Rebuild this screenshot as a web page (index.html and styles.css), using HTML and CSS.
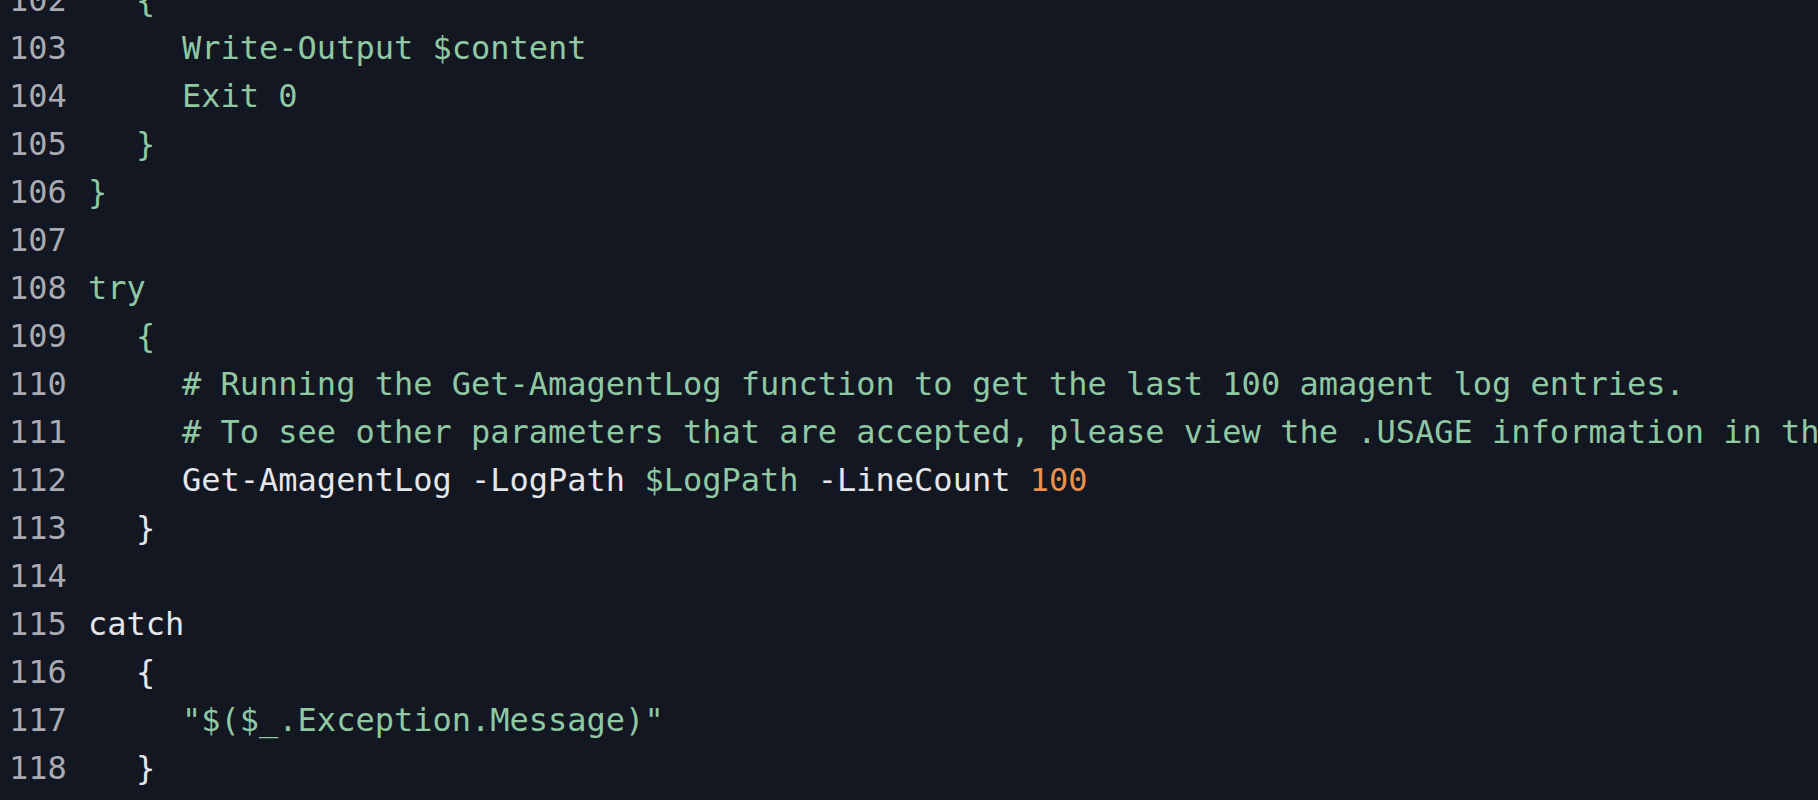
FILE: index.html
```html
<!DOCTYPE html>
<html lang="en">
<head>
<meta charset="utf-8">
<title>Code</title>
<link rel="stylesheet" href="styles.css">
</head>
<body>
<div class="viewer">
  <div class="line"><span class="ln">102</span><span class="code i1"><span class="g">{</span></span></div>
  <div class="line"><span class="ln">103</span><span class="code i2"><span class="g">Write-Output $content</span></span></div>
  <div class="line"><span class="ln">104</span><span class="code i2"><span class="g">Exit 0</span></span></div>
  <div class="line"><span class="ln">105</span><span class="code i1"><span class="g">}</span></span></div>
  <div class="line"><span class="ln">106</span><span class="code"><span class="g">}</span></span></div>
  <div class="line"><span class="ln">107</span><span class="code"></span></div>
  <div class="line"><span class="ln">108</span><span class="code"><span class="g">try</span></span></div>
  <div class="line"><span class="ln">109</span><span class="code i1"><span class="g">{</span></span></div>
  <div class="line"><span class="ln">110</span><span class="code i2"><span class="g"># Running the Get-AmagentLog function to get the last 100 amagent log entries.</span></span></div>
  <div class="line"><span class="ln">111</span><span class="code i2"><span class="g"># To see other parameters that are accepted, please view the .USAGE information in th</span></span></div>
  <div class="line"><span class="ln">112</span><span class="code i2"><span class="w">Get-AmagentLog -LogPath </span><span class="g">$LogPath</span><span class="w"> -LineCount </span><span class="o">100</span></span></div>
  <div class="line"><span class="ln">113</span><span class="code i1"><span class="w">}</span></span></div>
  <div class="line"><span class="ln">114</span><span class="code"></span></div>
  <div class="line"><span class="ln">115</span><span class="code"><span class="w">catch</span></span></div>
  <div class="line"><span class="ln">116</span><span class="code i1"><span class="w">{</span></span></div>
  <div class="line"><span class="ln">117</span><span class="code i2"><span class="g">"$($_.Exception.Message)"</span></span></div>
  <div class="line"><span class="ln">118</span><span class="code i1"><span class="w">}</span></span></div>
</div>
</body>
</html>
```
FILE: styles.css
```css
html, body {
  margin: 0;
  padding: 0;
  height: 100%;
  overflow: hidden;
  background: #121722;
}
.viewer {
  margin-top: -24px;
  font-family: "DejaVu Sans Mono", monospace;
  font-size: 32px;
  line-height: 48px;
  display: flex;
  flex-direction: column;
}
.line {
  display: flex;
  height: 48px;
  white-space: pre;
}
.ln {
  flex: 0 0 auto;
  width: 79px;
  padding-left: 9px;
  color: #a9aab2;
}
.code {
  flex: 1 1 auto;
  white-space: pre;
}
.i1 { padding-left: 48px; }
.i2 { padding-left: 94px; }
.g { color: #8fc8a2; }
.w { color: #e4e6ea; }
.o { color: #e8914c; }
```
